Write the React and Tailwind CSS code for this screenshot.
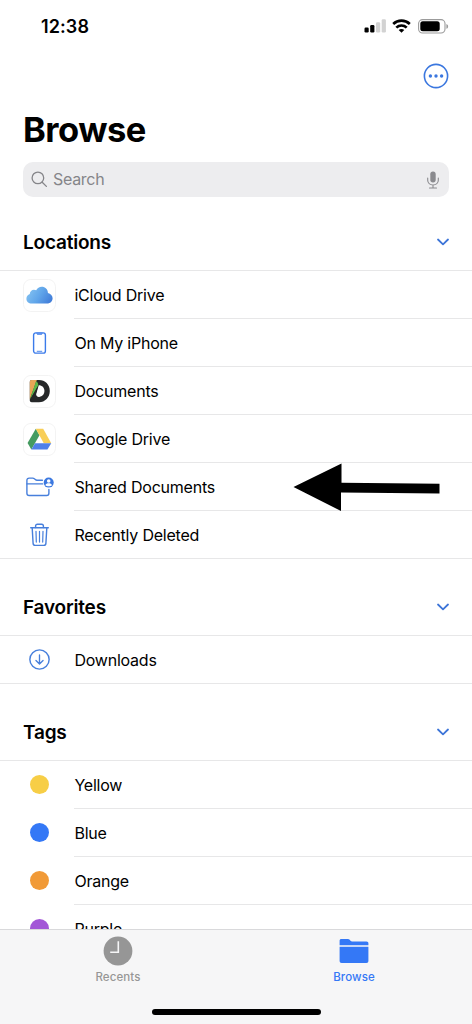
import React, { useState } from "react";

const locations = [
  { id: "icloud", label: "iCloud Drive", icon: <ICloudIcon /> },
  { id: "iphone", label: "On My iPhone", icon: <PhoneIcon /> },
  { id: "documents", label: "Documents", icon: <DocumentsIcon /> },
  { id: "gdrive", label: "Google Drive", icon: <GoogleDriveIcon /> },
  { id: "shared", label: "Shared Documents", icon: <SharedFolderIcon />, arrow: true },
  { id: "deleted", label: "Recently Deleted", icon: <TrashIcon /> },
];

const favorites = [
  { id: "downloads", label: "Downloads", icon: <DownloadIcon /> },
];

const tags = [
  { id: "yellow", label: "Yellow", icon: <TagDot className="bg-[#f7ce46]" /> },
  { id: "blue", label: "Blue", icon: <TagDot className="bg-[#3478f6]" /> },
  { id: "orange", label: "Orange", icon: <TagDot className="bg-[#f19a37]" /> },
  { id: "purple", label: "Purple", icon: <TagDot className="bg-[#a357d7]" /> },
];

export default function App() {
  const [tab, setTab] = useState("browse");

  return (
    <div className="flex h-screen w-full flex-col overflow-hidden bg-white font-['Inter',sans-serif] text-black">
      <StatusBar />

      {/* Toolbar */}
      <div className="flex h-12 shrink-0 items-center justify-end pr-[23px]">
        <button aria-label="More">
          <svg width="26" height="26" viewBox="0 0 26 26" fill="none">
            <circle cx="13" cy="13" r="11.6" stroke="#3b77df" strokeWidth="1.6" />
            <circle cx="7.4" cy="13" r="1.7" fill="#3b77df" />
            <circle cx="13" cy="13" r="1.7" fill="#3b77df" />
            <circle cx="18.6" cy="13" r="1.7" fill="#3b77df" />
          </svg>
        </button>
      </div>

      <h1 className="mt-2 h-[54px] shrink-0 pl-[23px] text-[34.5px] leading-[44px] font-bold tracking-[-0.5px]">
        Browse
      </h1>

      {/* Search */}
      <div className="mx-[23px] flex h-[35px] shrink-0 items-center rounded-[10px] bg-[#ededef] pr-[10px] pl-2">
        <svg width="17" height="17" viewBox="0 0 17 17" fill="none" stroke="#858589" strokeWidth="1.3" strokeLinecap="round">
          <circle cx="6.9" cy="6.9" r="5.8" />
          <path d="M11.2 11.2 15.4 15.4" />
        </svg>
        <span className="ml-[5px] flex-1 pb-[2px] text-[16px] tracking-[-0.3px] text-[#858589]">Search</span>
        <svg width="12" height="18" viewBox="0 0 12 18" fill="none" stroke="#8a8a8e" strokeWidth="1.1" strokeLinecap="round">
          <rect x="3.3" y="0.5" width="5.4" height="11" rx="2.7" fill="#8a8a8e" stroke="none" />
          <path d="M.7 7v2.3C.7 12 3 14 6 14s5.3-2 5.3-4.7V7M6 14v3M2.5 17h7" />
        </svg>
      </div>

      <main className="flex min-h-0 flex-1 flex-col overflow-hidden">
        <Section title="Locations" items={locations} headerClass="h-[74px]" />
        <Section title="Favorites" items={favorites} headerClass="h-[77px]" />
        <Section title="Tags" items={tags} headerClass="h-[77px]" />
      </main>

      {/* Tab bar */}
      <nav className="flex h-[95px] shrink-0 flex-col border-t border-[#d9d9db] bg-[#f6f6f7]">
        <div className="flex h-[79px]">
          <button
            onClick={() => setTab("recents")}
            className={`flex flex-1 flex-col items-center pt-[6px] ${tab === "recents" ? "text-[#3478f6]" : "text-[#969696]"}`}
          >
            <svg width="30" height="30" viewBox="0 0 30 30">
              <circle cx="15" cy="15" r="14.4" fill="currentColor" />
              <path d="M15.3 5.2V16.3H7.2" fill="none" stroke="#f6f6f7" strokeWidth="1.6" />
            </svg>
            <span className="mt-[3px] text-[11.5px] leading-4 font-medium tracking-[0.1px]">Recents</span>
          </button>
          <button
            onClick={() => setTab("browse")}
            className={`flex flex-1 flex-col items-center pt-[6px] ${tab === "browse" ? "text-[#3478f6]" : "text-[#969696]"}`}
          >
            <svg width="30" height="30" viewBox="0 0 30 30" fill="currentColor">
              <path d="M.6 9.2V4.8C.6 3.6 1.3 3 2.4 3h6.5c.8 0 1.3.2 1.8.8l.8.9c.5.6.9.8 1.6.8h14.400c1.200 0 1.900.7 1.900 1.800v1.900Z" />
              <path d="M.6 10.800h28.800v14.100c0 1.300-.7 2-2 2H2.600c-1.300 0-2-.7-2-2Z" />
            </svg>
            <span className="mt-[3px] text-[11.5px] leading-4 font-medium tracking-[0.1px]">Browse</span>
          </button>
        </div>
        <div className="mx-auto h-[6px] w-[169px] rounded-full bg-black" />
      </nav>
    </div>
  );
}

function StatusBar() {
  return (
    <header className="flex h-[52px] shrink-0 items-center justify-between pr-[23px] pl-[41px]">
      <span className="text-[18px] font-semibold tracking-[0.1px]">12:38</span>
      <div className="flex items-center">
        <svg width="22" height="14" viewBox="0 0 22 14">
          <rect x="0.5" y="8.5" width="4.2" height="5" rx="1.2" />
          <rect x="6.2" y="6" width="4.2" height="7.5" rx="1.2" />
          <rect x="12" y="3.2" width="4.2" height="10.3" rx="1.2" fill="#d2d2d2" />
          <rect x="17.7" y="0.2" width="4.2" height="13.3" rx="1.2" fill="#d2d2d2" />
        </svg>
        <svg className="ml-[6px]" width="19" height="14" viewBox="0 0 19 14" fill="none" stroke="#000" strokeWidth="2.7">
          <path d="M1.2 5C5.9.6 13.1.6 17.8 5" />
          <path d="M4.3 8.6c2.900-2.800 7.500-2.800 10.400 0" />
          <path d="M9.5 13.700 6.700 11c1.500-1.400 4.100-1.400 5.600 0Z" fill="#000" stroke="none" />
        </svg>
        <svg className="ml-[7px]" width="31" height="15" viewBox="0 0 31 15">
          <rect x="0.6" y="0.6" width="26.4" height="13.4" rx="4" fill="none" stroke="#9b9b9b" strokeWidth="1.1" />
          <rect x="2.3" y="2.3" width="19.4" height="10" rx="2.5" />
          <path d="M28.4 5v4.8c1.100-.4 1.700-1.300 1.700-2.400S29.500 5.400 28.400 5Z" fill="#9b9b9b" />
        </svg>
      </div>
    </header>
  );
}

function Section({ title, items, headerClass }) {
  const [open, setOpen] = useState(true);

  return (
    <section className="shrink-0">
      <button
        onClick={() => setOpen(!open)}
        className={`flex w-full items-end justify-between border-b border-[#e7e7e8] pr-[22px] pb-[14px] pl-[23px] ${headerClass}`}
      >
        <h2 className="text-[19px] leading-[26px] font-semibold tracking-[-0.2px]">{title}</h2>
        <svg className={open ? "mb-[10px]" : "mb-[10px] -rotate-90"} width="13" height="8" viewBox="0 0 13 8" fill="none" stroke="#3d75d8" strokeWidth="1.8" strokeLinecap="round" strokeLinejoin="round">
          <path d="m1 1.500 5 4.800 5-4.800" />
        </svg>
      </button>
      {open && (
        <ul className="border-b border-[#e7e7e8]">
          {items.map((item, i) => (
            <li key={item.id} className="flex h-12 items-stretch last:h-[47px]">
              <div className="flex w-[56px] shrink-0 items-center justify-center pl-[23px]">{item.icon}</div>
              <div
                className={`ml-[18.4px] flex flex-1 items-center justify-between ${
                  i < items.length - 1 ? "border-b border-[#e7e7e8]" : ""
                }`}
              >
                <span className="text-[16px] tracking-[-0.22px]">{item.label}</span>
                {item.arrow && <PointerArrow />}
              </div>
            </li>
          ))}
        </ul>
      )}
    </section>
  );
}

function TagDot({ className }) {
  return <span className={`mb-px size-[19px] shrink-0 rounded-full ${className}`} />;
}

// White rounded tile behind the app logos
function AppTile({ children }) {
  return (
    <svg className="size-[33px] shrink-0" viewBox="0 0 34 34">
      <rect x="0.5" y="0.5" width="33" height="33" rx="7.5" fill="#fff" stroke="#f3f3f3" />
      {children}
    </svg>
  );
}

function ICloudIcon() {
  return (
    <AppTile>
      <defs>
        <linearGradient id="cloud" x1="0" y1="0.3" x2="1" y2="0.7">
          <stop offset="0" stopColor="#84c2f1" />
          <stop offset="0.5" stopColor="#61a6ea" />
          <stop offset="1" stopColor="#427ed9" />
        </linearGradient>
      </defs>
      <path
        d="M9 25.200c-3.300 0-5.500-2.100-5.500-4.900 0-2.400 1.500-4.200 3.500-4.800.1-2.700 2-4.400 4.300-4.400.9 0 1.700.2 2.300.6 1.200-2.200 3.200-3.600 5.700-3.600 3.500 0 6.200 2.500 6.400 6.200 2.800.6 4.800 2.800 4.800 5.500 0 3.100-2.400 5.400-5.700 5.400Z"
        fill="url(#cloud)"
      />
    </AppTile>
  );
}

function PhoneIcon() {
  return (
    <svg className="shrink-0" width="15" height="22" viewBox="0 0 15 22" fill="none" stroke="#3b7bea" strokeLinecap="round">
      <rect x="1.6" y="0.9" width="11.8" height="20.2" rx="2.2" strokeWidth="1.4" />
      <path d="M4.7 1.400c.2.900.6 1.100 1.300 1.100h3c.7 0 1.100-.2 1.300-1.100Z" fill="#3b7bea" strokeWidth="0.5" />
      <path d="M5.200 19.300h4.600" strokeWidth="0.9" />
    </svg>
  );
}

function DocumentsIcon() {
  return (
    <AppTile>
      <path
        fillRule="evenodd"
        d="M9 5.200h7.400C22.800 5.200 27.600 10 27.600 16.400S22.800 28 16.400 28H9c-1.200 0-2-.8-2-2V7.200c0-1.200.8-2 2-2Zm4.500 14.700c.4 2.300 1.800 3.200 3.900 2.600 3-.8 4.700-3 4.700-6 0-3.500-2.400-5.900-5.900-5.900Z"
        fill="#262829"
      />
      <path d="M7 25.200V7.200c0-1.200.7-2 1.800-2h5.400Z" fill="#e8a657" />
      <path d="m7 25.500 6.400-19c1.700.6 2.600 2.500 2.200 4.600Z" fill="#5cb749" />
      <path d="M7 26 15.600 11.100l-2.300 8.200L12 23l-4.300 3.800Z" fill="#262829" />
    </AppTile>
  );
}

function GoogleDriveIcon() {
  return (
    <AppTile>
      <path d="M13.200 6 4.700 20.700 8.600 27.300 17 12.500Z" fill="#459b61" />
      <path d="M13.200 6h7.600l8.300 14.800h-7.700Z" fill="#f8ce58" />
      <path d="M12.400 20.800h16.700l-3.900 6.500H8.600Z" fill="#5080e8" />
    </AppTile>
  );
}

function SharedFolderIcon() {
  return (
    <svg className="shrink-0" width="29" height="22" viewBox="0 0 29 22" fill="none" stroke="#477fdc" strokeWidth="1.4" strokeLinecap="round" strokeLinejoin="round">
      <path d="M17.400 4.300H12c-.7 0-1.200-.2-1.700-.7l-.9-.8c-.5-.5-1-.7-1.700-.7H4.200C2.700 2.100 1.900 2.900 1.900 4.400v12.800c0 1.500.8 2.300 2.300 2.300h17.400c1.500 0 2.300-.8 2.300-2.300V13.500" />
      <path d="M2 7.900h15.700" />
      <circle cx="23.7" cy="6.6" r="5" fill="#3b78e0" stroke="none" />
      <circle cx="23.7" cy="5" r="1.8" fill="#fff" stroke="none" />
      <path d="M20.400 9.200c.5-1.300 1.700-1.900 3.300-1.900s2.800.6 3.300 1.900c-1.600 1.500-5 1.500-6.600 0Z" fill="#fff" stroke="none" />
    </svg>
  );
}

function TrashIcon() {
  return (
    <svg className="shrink-0" width="21" height="24" viewBox="0 0 21 24" fill="none" stroke="#477fdc" strokeWidth="1.4" strokeLinecap="round" strokeLinejoin="round">
      <path d="M1.7 4.800h17.600" />
      <path d="M6.600 4.600V3c0-1.100.7-1.800 1.800-1.800h4.200c1.100 0 1.800.7 1.800 1.800v1.600" />
      <path d="m3.200 5 .9 15.400c.1 1.300.9 2 2.100 2h8.600c1.200 0 2-.7 2.100-2L17.800 5" />
      <path d="m7 8.300.3 10.800M10.500 8.300v10.800M14 8.300l-.3 10.800" strokeWidth="1.2" />
    </svg>
  );
}

function DownloadIcon() {
  return (
    <svg className="shrink-0" width="21" height="21" viewBox="0 0 22 22" fill="none" stroke="#477fdc" strokeWidth="1.5" strokeLinecap="round" strokeLinejoin="round">
      <circle cx="11" cy="11" r="10.1" />
      <path d="M11 6.200v9.300M7.300 12l3.700 3.700 3.700-3.700" strokeWidth="1.4" />
    </svg>
  );
}

function PointerArrow() {
  return (
    <svg className="mr-8 shrink-0" width="147" height="48" viewBox="0 0 147 48">
      <path d="M.5 24 48.500.5V19.800L146.500 20.800V30.500L48 29.500V48Z" />
    </svg>
  );
}
